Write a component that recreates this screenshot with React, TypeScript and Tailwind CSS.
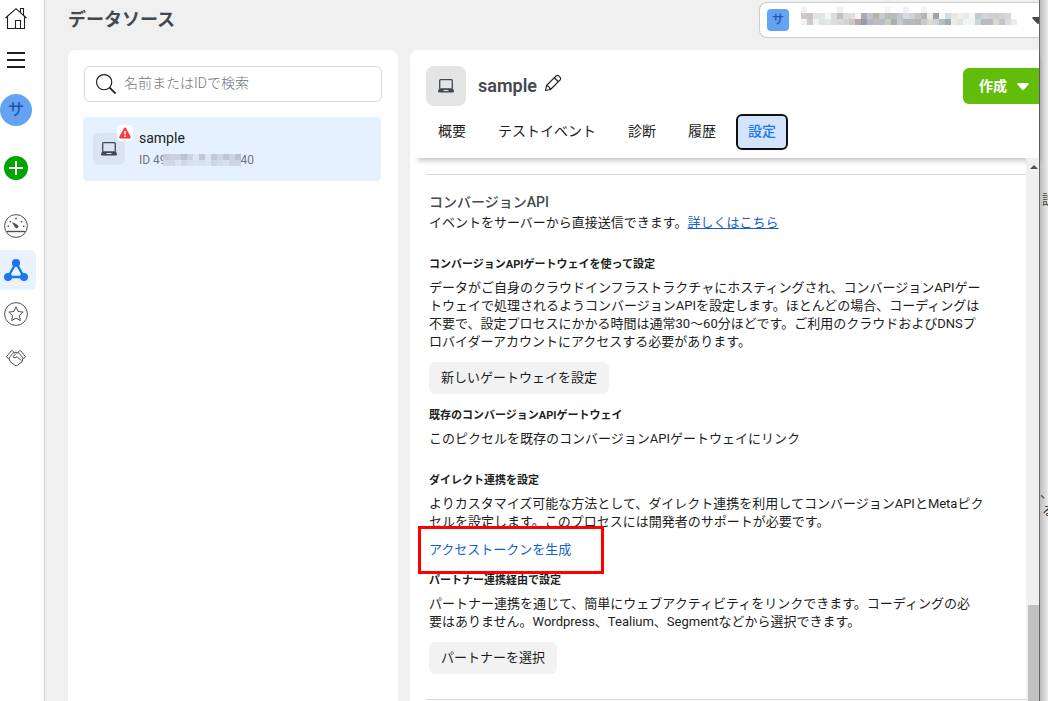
import type { ReactNode } from "react";
import clsx from "clsx";

const tabs = ["概要", "テストイベント", "診断", "履歴", "設定"];

const accountPixels = [
  ["#f1f1f1", "#fff", "#fff", "#fff", "#fff", "#fff", "#f1efef", "#fff", "#fff", "#fff", "#fff", "#fff", "#fff", "#fff", "#f6f6f6", "#fff", "#fff", "#f0f0f3", "#fff", "#fff", "#f3f3f5"],
  ["#cdcac1", "#d2c0c6", "#dbe4e9", "#e1e5e9", "#f6f6f6", "#dcdcda", "#bfc0bb", "#dcdcde", "#e0dddc", "#faf1e7", "#a9acb8", "#c3c4cd", "#b6b3ab", "#c5cbd1", "#bcbbb9", "#b9bbb6", "#c5c7d3", "#dadbdf", "#d0d4d2", "#c9c1c8", "#b7b0bb", "#eceae7", "#a0a2a8", "#f5f6f6", "#d4dde0", "#e7e6e5", "#f6eedf", "#deedf7", "#f9f5eb", "#c4c8d0", "#ccd6d9", "#d5cdd1", "#cdcfca", "#cfd4d8", "#d4d6da", "#fff"],
  ["#f0eff1", "#cbcbce", "#eff3f3", "#e0e3e3", "#e4e5e7", "#dadcde", "#dcdad6", "#d2d4d7", "#ccc7c7", "#b6a6b2", "#9b9ba6", "#b5b6c1", "#c4b9c4", "#b6bec5", "#c9cac5", "#a9b2b3", "#c5ccd2", "#b3b6ba", "#b6b9be", "#b7b3ae", "#cac8cc", "#dcdacd", "#ccd5d3", "#b4bcbc", "#a3aeb0", "#ecebeb", "#dce5e9", "#f5f4ee", "#eef4f6", "#cbd6da", "#b9bbc0", "#bdb9c1", "#dbd7d4", "#c1c4cb", "#dadce0", "#ececee"],
];

const idPixels = [
  ["#c8c9da", "#ccd0dd", "#c8d1df", "#bec1d0", "#cbd3dd", "#dce6ef", "#c0c8d6", "#dae7f0", "#c6c8d7", "#c8d7e1", "#bec7d5", "#cfd3df", "#bfc3d1"],
  ["#d1deea", "#d2d9e6", "#dae5ef", "#d0d9e8", "#d7e1ee", "#d8e5f2", "#d6e2ed", "#d9e7f4", "#ced8e5", "#d3deeb", "#d7e2ee", "#cfd6e3", "#d0d5e2"],
];

const Mosaic = ({ rows, className }: { rows: string[][]; className: string }) => (
  <svg viewBox={`0 0 ${rows[rows.length - 1].length * 6} ${rows.length * 6}`} className={className} shapeRendering="crispEdges" aria-hidden="true">
    {rows.map((row, y) =>
      row.map((fill, x) => <rect key={`${x}-${y}`} x={x * 6} y={y * 6} width="6" height="6" fill={fill} />)
    )}
  </svg>
);

const Icon = ({ children, className = "size-6" }: { children: ReactNode; className?: string }) => (
  <svg viewBox="0 0 24 24" fill="none" stroke="currentColor" className={clsx("shrink-0", className)} aria-hidden="true">
    {children}
  </svg>
);

const LaptopIcon = () => (
  <svg viewBox="0 0 16 14" className="h-3.5 w-4" fill="none" aria-hidden="true">
    <path d="M1.7 9V1.6q0-.9.9-.9h10.8q.9 0 .9.9V9" stroke="#414950" strokeWidth="1.3" />
    <path d="M1 9.2h14l1 3q0 1.3-1.2 1.3H1.2Q0 13.500 0 12.200z" fill="#414950" />
    <path d="M5.500 11.500h5" stroke="#e4e6e8" />
  </svg>
);

const Caret = ({ className }: { className: string }) => (
  <svg viewBox="0 0 12 7" className={clsx("shrink-0", className)} fill="currentColor" aria-hidden="true">
    <path d="M1 0h10q1.200.4.500 1.400L7 6.500q-1 .8-2 0L.5 1.400Q-.2.4 1 0z" />
  </svg>
);

const NavItem = ({ label, active, children }: { label: string; active?: boolean; children: ReactNode }) => (
  <a
    href="#"
    aria-label={label}
    className={clsx("flex h-10 w-9 items-center rounded-r-md pl-1", active ? "bg-[#ebf2ff] text-[#1877f2]" : "text-[#4b4f56]")}
  >
    {children}
  </a>
);

const Sidebar = () => (
  <aside className="flex w-[45px] shrink-0 flex-col border-r border-[#d0d0d0] bg-white">
    <a href="#" aria-label="ホーム" className="mt-px flex h-9 items-center pl-1 text-[#1c1e21]">
      <Icon>
        <path d="M1.500 11 12 1.700 22.500 11M3.500 9.500v12h17v-12M16.500 5V1.500h3V8M11.500 21.500v-8h5v8" strokeWidth="1.1" />
      </Icon>
    </a>
    <button aria-label="メニュー" className="mt-[11px] flex h-6 items-center pl-1 text-[#1c1e21]">
      <Icon>
        <path d="M3 5h18M3 12h18M3 19h18" strokeWidth="2" />
      </Icon>
    </button>
    <button className="mt-[22px] size-8 rounded-full bg-[#64a2f4] text-base font-medium text-[#1b56ad]">サ</button>
    <button aria-label="追加" className="mt-[30px] ml-1 size-6 rounded-full bg-[#00a400] text-white">
      <Icon>
        <path d="M12 5v14M5 12h14" strokeWidth="2" />
      </Icon>
    </button>
    <nav className="mt-[26px] flex flex-col gap-1">
      <NavItem label="概要">
        <Icon>
          <circle cx="12" cy="12" r="11.400" />
          <path d="M2.500 17.500h19" strokeWidth="1.400" />
          <path d="M8.700 8.700 13.700 11.500q.8 1-.2 2-1 .8-2-.2z" fill="currentColor" />
          <path d="M3.500 12.200H5M19 12.200h1.500M11.200 4.500h1.600M5.800 7.200l1 1M17.200 8.200l1-1" strokeWidth="1.600" />
        </Icon>
      </NavItem>
      <NavItem label="データソース" active>
        <Icon>
          <path d="M12 5 4 19h16z" strokeWidth="2.400" />
          <g fill="currentColor" stroke="none">
            <circle cx="12" cy="5" r="4.100" />
            <circle cx="4" cy="19" r="4" />
            <circle cx="20" cy="19" r="4" />
          </g>
        </Icon>
      </NavItem>
      <NavItem label="カスタムコンバージョン">
        <Icon>
          <circle cx="12" cy="12" r="11.400" />
          <path d="m12 4.800 2.100 4.700 5.100.6-3.800 3.500 1 5.100-4.400-2.600-4.400 2.600 1-5.100-3.800-3.500 5.100-.6z" strokeLinejoin="round" />
        </Icon>
      </NavItem>
      <NavItem label="パートナー連携">
        <Icon>
          <path d="m2.300 10.700 5-5.800q.6-.5 1.200 0l1.400 1.300-5.500 6.300zM21.700 10.700l-5-5.800q-.6-.5-1.200 0l-1.400 1.300 5.500 6.300z" strokeLinejoin="round" />
          <path d="m5 12 1 3.500 5 3.800q1.200.8 2.300 0l4.700-3.500L19 12M9.800 7l2.200-.8L14.200 7M12.500 7.500 9 10.300q.2 1.600 2 1.400l2-1 4.500 4" strokeLinejoin="round" />
        </Icon>
      </NavItem>
    </nav>
  </aside>
);

const TopBar = () => (
  <header className="flex h-[50px] shrink-0 items-start justify-between pl-[23px]">
    <h1 className="mt-2 text-lg leading-6 font-bold text-[#444950]">データソース</h1>
    <button className="mt-0.5 flex h-9 w-[280px] items-center overflow-hidden rounded-l-lg border border-r-0 border-[#ccc] bg-white pl-[7px] text-[#444950]">
      <span className="flex size-[22px] shrink-0 items-center justify-center rounded bg-[#64a2f4] text-xs font-medium text-[#1b56ad]">サ</span>
      <Mosaic rows={accountPixels} className="mb-2 ml-3 h-[18px] w-[216px] shrink-0" />
      <Caret className="ml-[15px] h-[7px] w-3" />
    </button>
  </header>
);

const SourceList = () => (
  <section className="w-[330px] shrink-0 rounded-t-lg bg-white pt-4 pr-4 pl-[15px]">
    <label className="ml-px flex h-9 items-center gap-[7px] rounded-md border border-[#d8d8d8] pl-2.5">
      <Icon className="size-[22px] text-[#1c1e21]">
        <circle cx="10" cy="10" r="8.300" strokeWidth="1.300" />
        <path d="m16 16 6.500 6.500" strokeWidth="2" />
      </Icon>
      <input
        type="search"
        aria-label="検索"
        placeholder="名前またはIDで検索"
        className="mb-0.5 w-full min-w-0 text-sm font-light outline-none placeholder:text-[#70757a]"
      />
    </label>
    <a href="#" className="mt-[15px] mr-px flex h-16 items-center rounded bg-[#e5f1ff] pl-2.5">
      <span className="relative flex size-8 items-center justify-center rounded-md bg-[#d9e5f2]">
        <LaptopIcon />
        <span className="absolute -top-2 -right-2 flex size-4 items-center justify-center rounded bg-white">
          <svg viewBox="0 0 12 12" className="size-3" aria-hidden="true">
            <path d="M5 1.200q1-1.600 2 0l4.700 8.500q.6 1.600-1 1.800H1.300q-1.600-.2-1-1.800z" fill="#fa383e" />
            <path d="M6 4v3.600M6 8.600v1.500" stroke="#fff" strokeWidth="1.500" />
          </svg>
        </span>
      </span>
      <span className="ml-3.5">
        <span className="block text-sm leading-[22px] text-[#1c1e21]">sample</span>
        <span className="flex items-center text-xs leading-[22px] text-[#70757a]">
          ID 49
          <Mosaic rows={idPixels} className="-ml-1 h-3 w-[78px]" />
          40
        </span>
      </span>
    </a>
  </section>
);

const Heading = ({ className, children }: { className: string; children: ReactNode }) => (
  <h3 className={clsx("text-[11px] leading-5 font-bold text-[#1c1e21]", className)}>{children}</h3>
);

const SettingsContent = () => (
  <div className="min-w-0 flex-1 overflow-hidden pt-4 pl-4 text-[13px] leading-[18px] text-[#1c1e21]">
    <div className="border-y border-[#d8d8d8] pt-[17px] pb-[25px] pl-[3px]">
      <h2 className="text-sm leading-5 font-medium text-[#444950]">コンバージョンAPI</h2>
      <p className="leading-[22px]">
        イベントをサーバーから直接送信できます。
        <a href="#" className="text-[#1461cc] underline">詳しくはこちら</a>
      </p>

      <Heading className="mt-[21px]">コンバージョンAPIゲートウェイを使って設定</Heading>
      <p className="mt-1">
        データがご自身のクラウドインフラストラクチャにホスティングされ、コンバージョンAPIゲー
        <br />
        トウェイで処理されるようコンバージョンAPIを設定します。ほとんどの場合、コーディングは
        <br />
        不要で、設定プロセスにかかる時間は通常30～60分ほどです。ご利用のクラウドおよびDNSプ
        <br />
        ロバイダーアカウントにアクセスする必要があります。
      </p>
      <button className="mt-[11px] h-8 rounded-md bg-[#f2f2f2] px-3">新しいゲートウェイを設定</button>

      <Heading className="mt-3">既存のコンバージョンAPIゲートウェイ</Heading>
      <p className="mt-1">このピクセルを既存のコンバージョンAPIゲートウェイにリンク</p>

      <Heading className="mt-[23px]">ダイレクト連携を設定</Heading>
      <p className="mt-1">
        よりカスタマイズ可能な方法として、ダイレクト連携を利用してコンバージョンAPIとMetaピク
        <br />
        セルを設定します。このプロセスには開発者のサポートが必要です。
      </p>
      <div className="relative mt-2.5 w-fit">
        <a href="#" className="block text-[#1461cc]">アクセストークンを生成</a>
        <div className="pointer-events-none absolute -top-[15px] -left-[11px] h-12 w-[186px] border-3 border-[#f00]" />
      </div>

      <Heading className="mt-3">パートナー連携経由で設定</Heading>
      <p className="mt-1">
        パートナー連携を通じて、簡単にウェブアクティビティをリンクできます。コーディングの必
        <br />
        要はありません。Wordpress、Tealium、Segmentなどから選択できます。
      </p>
      <button className="mt-[11px] h-8 rounded-md bg-[#f2f2f2] px-3">パートナーを選択</button>
    </div>
  </div>
);

const SourceDetail = () => (
  <section className="flex min-w-0 flex-1 flex-col rounded-tl-lg bg-white">
    <div className="z-10 ml-1 shrink-0 bg-white pt-4 pb-2 pl-3 shadow-[2px_5px_5px_-2px_rgba(0,0,0,0.22)]">
      <div className="flex items-center">
        <span className="flex size-10 items-center justify-center rounded-lg bg-[#e4e4e4]">
          <LaptopIcon />
        </span>
        <h2 className="ml-3 text-lg font-semibold text-[#444950]">sample</h2>
        <button aria-label="名前を編集" className="mb-1.5 ml-1.5">
          <Icon className="size-5 text-[#1c1e21]">
            <path d="m3 21 1.200-6L15.800 3.400q1.500-1.200 3 0l1.800 1.800q1.200 1.500 0 3L9 19.800zM13.500 5.700l4.800 4.800M4.200 15q3 .4 4.800 4.800" strokeWidth="1.400" strokeLinejoin="round" />
          </Icon>
        </button>
        <button className="ml-auto flex h-9 w-[76px] items-center gap-2.5 rounded-l-md bg-[#62bd0b] pl-4 text-sm font-bold text-white">
          作成
          <Caret className="h-[7px] w-3" />
        </button>
      </div>
      <div role="tablist" className="mt-2 flex gap-2">
        {tabs.map((tab) => (
          <button
            key={tab}
            role="tab"
            aria-selected={tab === "設定"}
            className={clsx(
              "h-9 rounded-md border-2 px-2.5 pb-0.5 text-sm",
              tab === "設定" ? "border-[#111] bg-[#d3e4fd] font-medium text-[#1877f2]" : "border-transparent text-[#1c1e21]"
            )}
          >
            {tab}
          </button>
        ))}
      </div>
    </div>
    <div className="flex min-h-0 flex-1">
      <SettingsContent />
      <div className="z-20 flex w-[13px] shrink-0 flex-col items-end justify-between bg-[#f0f0f0]">
        <svg viewBox="0 0 8 4" className="mt-[7px] mr-px h-1 w-2" fill="#505050" aria-hidden="true">
          <path d="M4 0 8 4H0z" />
        </svg>
        <div className="h-24 w-[11px] bg-[#c1c1c1]" />
      </div>
    </div>
  </section>
);

const BackWindow = () => (
  <div className="flex w-[9px] shrink-0 flex-col overflow-hidden border-l border-[#666] bg-linear-to-r from-[#bdbdbd] to-[#ebebeb] text-[13px] leading-[18px] text-[#333]">
    <p className="mt-[191px] ml-0.5">説</p>
    <p className="mt-[275px]">、</p>
    <p className="ml-0.5">る</p>
  </div>
);

export default function App() {
  return (
    <div className="flex h-screen overflow-hidden bg-[#f0f0f0] font-[Roboto,'Noto_Sans_CJK_JP',sans-serif]">
      <Sidebar />
      <main className="flex min-w-0 flex-1 flex-col">
        <TopBar />
        <div className="flex min-h-0 flex-1 gap-3 pl-[23px]">
          <SourceList />
          <SourceDetail />
        </div>
      </main>
      <BackWindow />
    </div>
  );
}
